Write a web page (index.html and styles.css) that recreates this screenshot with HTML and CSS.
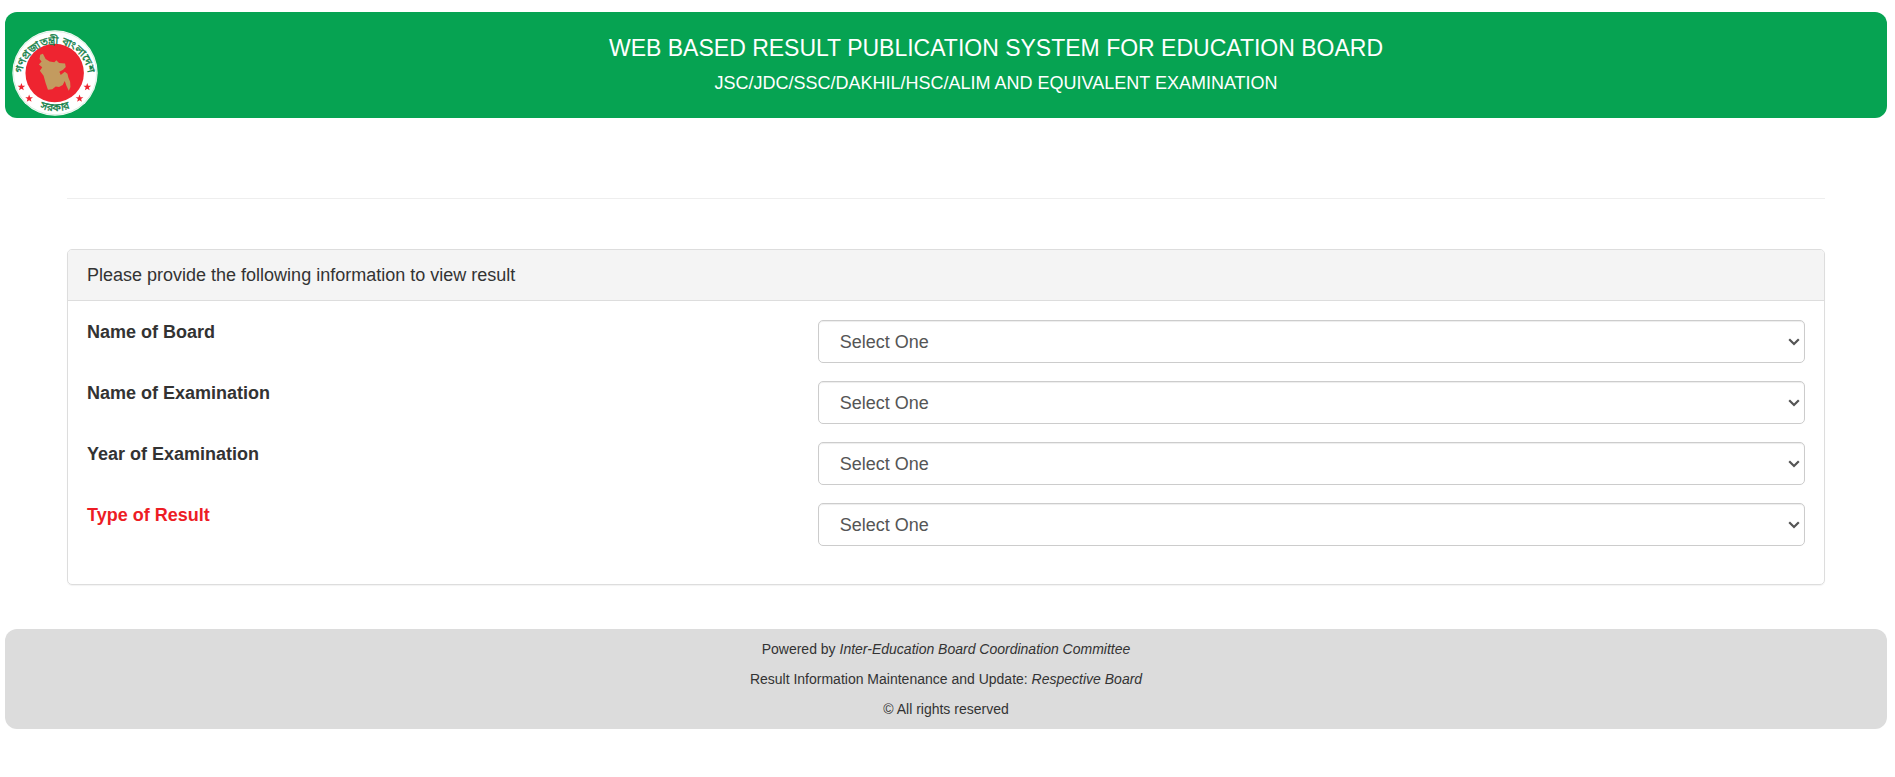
FILE: index.html
```html
<!DOCTYPE html>
<html lang="en">
<head>
    <meta charset="UTF-8">
    <meta name="viewport" content="width=device-width, initial-scale=1.0">
    <title>Web Based Result Publication System for Education Board</title>
    <link rel="stylesheet" href="styles.css">
</head>
<body>

    <header class="header">
        <div class="logo-box">
            <svg class="logo" viewBox="38 92 256 256" role="img" aria-label="Government of Bangladesh">
                <defs>
                    <path id="arc-top" d="M68 232 A98 98 0 1 1 264 232"/>
                    <path id="arc-bottom" d="M58 254 A113 113 0 0 0 274 254"/>
                    <path id="star" d="M0-12 3-4 11.5-3.7 4.7 1.5 7.1 9.7 0 4.9-7.1 9.7-4.7 1.5-11.5-3.7-3-4Z"/>
                </defs>
                <circle cx="166" cy="220" r="127" fill="#fff"/>
                <circle cx="166" cy="220" r="124" fill="none" stroke="#8fcfa9" stroke-width="1"/>
                <circle cx="165" cy="220" r="87" fill="#ee2430"/>
                <path class="map" d="M122 166 130 163 138 178 150 186 164 188 170 182 178 190 196 192 198 202 190 210 179 216 183 226 195 216 203 222 206 234 211 246 212 262 207 273 200 258 195 244 189 256 178 262 168 260 158 268 145 270 138 250 132 228 121 213 128 203 118 195 126 186 120 178Z"/>
                <text class="logo-text"><textPath href="#arc-top" startOffset="50%">গণপ্রজাতন্ত্রী বাংলাদেশ</textPath></text>
                <text class="logo-text"><textPath href="#arc-bottom" startOffset="50%">সরকার</textPath></text>
                <g fill="#ee2430">
                    <use href="#star" x="66" y="262"/>
                    <use href="#star" x="89" y="296"/>
                    <use href="#star" x="239" y="296"/>
                    <use href="#star" x="262" y="262"/>
                </g>
            </svg>
        </div>
        <div class="header-text">
            <h1>WEB BASED RESULT PUBLICATION SYSTEM FOR EDUCATION BOARD</h1>
            <h2>JSC/JDC/SSC/DAKHIL/HSC/ALIM AND EQUIVALENT EXAMINATION</h2>
        </div>
    </header>

    <main class="container">
        <hr>
        <div class="panel">
            <div class="panel-heading">Please provide the following information to view result</div>
            <form class="panel-body">
                <div class="form-row">
                    <label for="board">Name of Board</label>
                    <div class="field">
                        <select id="board"><option>Select One</option></select>
                    </div>
                </div>
                <div class="form-row">
                    <label for="exam">Name of Examination</label>
                    <div class="field">
                        <select id="exam"><option>Select One</option></select>
                    </div>
                </div>
                <div class="form-row">
                    <label for="year">Year of Examination</label>
                    <div class="field">
                        <select id="year"><option>Select One</option></select>
                    </div>
                </div>
                <div class="form-row">
                    <label for="type" class="required">Type of Result</label>
                    <div class="field">
                        <select id="type"><option>Select One</option></select>
                    </div>
                </div>
            </form>
        </div>
    </main>

    <footer class="footer">
        <p>Powered by <em>Inter-Education Board Coordination Committee</em></p>
        <p>Result Information Maintenance and Update: <em>Respective Board</em></p>
        <p>© All rights reserved</p>
    </footer>

</body>
</html>
```
FILE: styles.css
```css
* {
    box-sizing: border-box;
}

body {
    margin: 12px 8px 12px 5px;
    font-family: "Liberation Sans", Arial, sans-serif;
    font-size: 18px;
    line-height: 26px;
    color: #333;
    background-color: #fff;
}

.header {
    display: flex;
    background-color: #06a352;
    border-radius: 12px;
    color: #fff;
    text-align: center;
}

.logo-box {
    width: 100px;
    padding: 18px 0 0 7px;
}

.logo {
    display: block;
    width: 86px;
    height: 86px;
    overflow: visible;
}

.map {
    fill: #c39b5f;
}

.logo-text {
    font-family: "Noto Sans Bengali", "Noto Sans", sans-serif;
    font-size: 32px;
    fill: #16814a;
    stroke: #16814a;
    stroke-width: 1px;
    text-anchor: middle;
}

.header-text {
    flex: 1;
    padding: 22px 0;
}

h1 {
    margin: 0 0 8px;
    font-size: 23px;
    line-height: 28px;
    font-weight: normal;
}

h2 {
    margin: 0;
    font-size: 18px;
    line-height: 26px;
    font-weight: normal;
}

.container {
    padding: 80px 62px 44px;
}

hr {
    margin: 0 0 50px;
    border: 0;
    border-top: 1px solid #eee;
}

.panel {
    border: 1px solid #ddd;
    border-radius: 5px;
    box-shadow: 0 1px 1px rgba(0, 0, 0, 0.05);
}

.panel-heading {
    padding: 12px 19px;
    background-color: #f4f4f4;
    border-bottom: 1px solid #ddd;
    border-radius: 4px 4px 0 0;
}

.panel-body {
    padding: 19px 1px 20px;
}

.form-row {
    display: grid;
    grid-template-columns: 5fr 7fr;
    margin-bottom: 18px;
}

.form-row label {
    padding: 0 18px;
    font-weight: bold;
    line-height: 25px;
}

.form-row .required {
    color: #ed1c24;
}

.field {
    padding: 0 18px;
}

select {
    display: block;
    width: 100%;
    height: 43px;
    padding: 7px 21px;
    border: 1px solid #ccc;
    border-radius: 5px;
    box-shadow: inset 0 1px 1px rgba(0, 0, 0, 0.075);
    background: #fff url("data:image/svg+xml,%3Csvg xmlns='http://www.w3.org/2000/svg' viewBox='0 0 12 8'%3E%3Cpath d='M1.2 1.2 6 6l4.8-4.8' fill='none' stroke='%23555' stroke-width='2.2'/%3E%3C/svg%3E") no-repeat right 4px center / 12px 8px;
    appearance: none;
    color: #555;
    font-family: inherit;
    font-size: 18px;
}

.footer {
    padding: 10px 0 9px;
    background-color: #dcdcdc;
    border-radius: 12px;
    text-align: center;
    font-size: 14px;
    line-height: 21px;
}

.footer p {
    margin: 0 0 9px;
}

.footer p:last-child {
    margin-bottom: 0;
}
```
